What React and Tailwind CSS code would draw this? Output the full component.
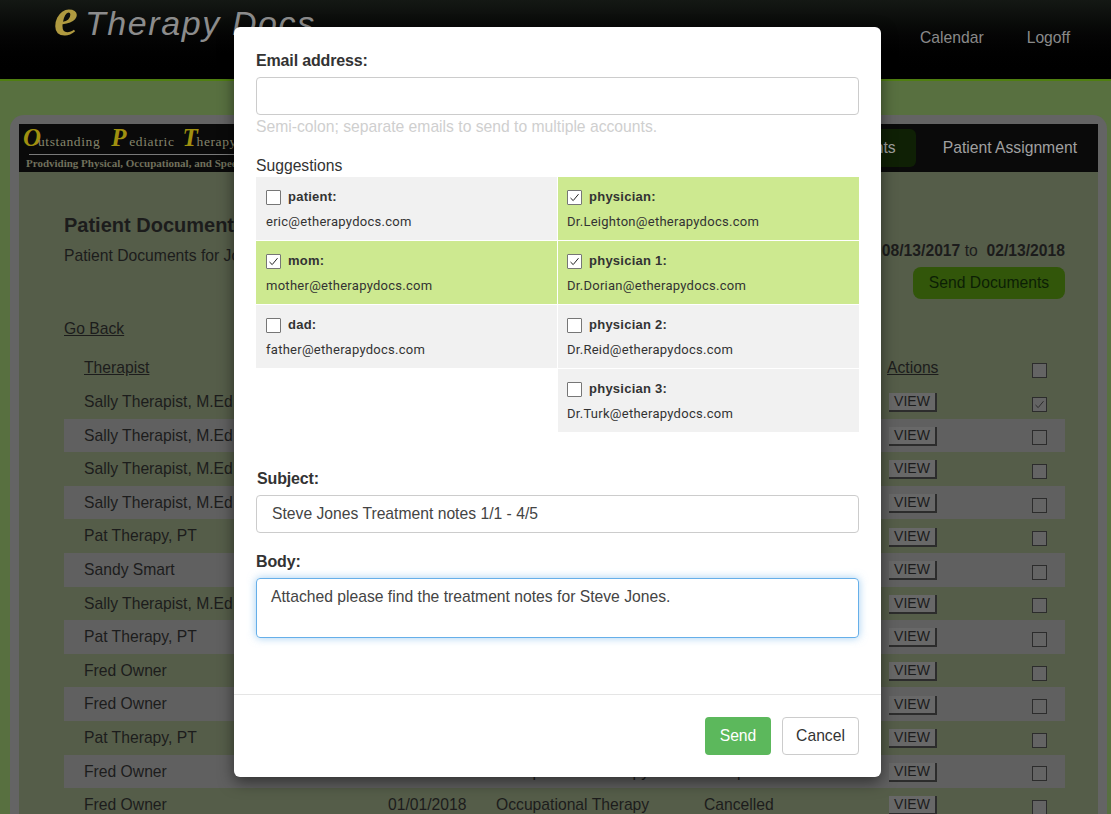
import React from 'react';

const rows = [
  { name: 'Sally Therapist, M.Ed', date: '01/12/2018', type: 'Speech Therapy', status: 'Completed', checked: true },
  { name: 'Sally Therapist, M.Ed', date: '01/11/2018', type: 'Speech Therapy', status: 'Completed' },
  { name: 'Sally Therapist, M.Ed', date: '01/10/2018', type: 'Speech Therapy', status: 'Completed' },
  { name: 'Sally Therapist, M.Ed', date: '01/09/2018', type: 'Speech Therapy', status: 'Completed' },
  { name: 'Pat Therapy, PT', date: '01/08/2018', type: 'Physical Therapy', status: 'Completed' },
  { name: 'Sandy Smart', date: '01/08/2018', type: 'Occupational Therapy', status: 'Completed' },
  { name: 'Sally Therapist, M.Ed', date: '01/05/2018', type: 'Speech Therapy', status: 'Completed' },
  { name: 'Pat Therapy, PT', date: '01/04/2018', type: 'Physical Therapy', status: 'Completed' },
  { name: 'Fred Owner', date: '01/04/2018', type: 'Occupational Therapy', status: 'Completed' },
  { name: 'Fred Owner', date: '01/03/2018', type: 'Occupational Therapy', status: 'Completed' },
  { name: 'Pat Therapy, PT', date: '01/02/2018', type: 'Physical Therapy', status: 'Completed' },
  { name: 'Fred Owner', date: '01/02/2018', type: 'Occupational Therapy', status: 'Completed' },
  { name: 'Fred Owner', date: '01/01/2018', type: 'Occupational Therapy', status: 'Cancelled' },
];

const leftSuggestions = [
  { label: 'patient:', email: 'eric@etherapydocs.com' },
  { label: 'mom:', email: 'mother@etherapydocs.com', on: true },
  { label: 'dad:', email: 'father@etherapydocs.com' },
];

const rightSuggestions = [
  { label: 'physician:', email: 'Dr.Leighton@etherapydocs.com', on: true },
  { label: 'physician 1:', email: 'Dr.Dorian@etherapydocs.com', on: true },
  { label: 'physician 2:', email: 'Dr.Reid@etherapydocs.com' },
  { label: 'physician 3:', email: 'Dr.Turk@etherapydocs.com' },
];

const Check = ({ stroke }) => (
  <svg width="11" height="11" viewBox="0 0 11 11" fill="none" stroke={stroke} strokeWidth="1">
    <path d="M1.5 6 L4.2 8.6 L9.5 2.2" />
  </svg>
);

const Suggestion = ({ item, right }) => (
  <div className={`h-[63px] pt-[12px] ${right ? 'pl-[9px]' : 'pl-[10px]'} ${item.on ? 'bg-[#cde990]' : 'bg-[#f1f1f1]'}`}>
    <div className="flex items-center gap-[7px] text-[13px] leading-[16px] font-bold text-[#333]">
      <span className="flex h-[15px] w-[15px] shrink-0 items-center justify-center rounded-[1px] border border-[#767676] bg-white">
        {item.on && <Check stroke="#222" />}
      </span>
      <span className="tracking-[0.25px]">{item.label}</span>
    </div>
    <div className="mt-[9px] font-['Roboto',sans-serif] text-[13px] leading-[16px] tracking-[0.27px] text-[#333]">{item.email}</div>
  </div>
);

const TableCheck = ({ checked }) => (
  <span className="mt-[5px] flex h-[15px] w-[15px] items-center justify-center border border-[#2c2c2c] bg-[#646464]">
    {checked && <Check stroke="#2c2c2c" />}
  </span>
);

const TableRow = ({ row, index }) => (
  <div className={`grid h-[33.6px] grid-cols-[304px_108px_208px_185px_143px_1fr] items-center pl-[20px] ${index % 2 === 1 ? 'bg-[#606060]' : ''}`}>
    <span>{row.name}</span>
    <span>{row.date}</span>
    <span>{row.type}</span>
    <span>{row.status}</span>
    <span>
      <span className="mt-[2px] flex h-[19px] w-[48px] items-center justify-center border-r-2 border-b-2 border-[#2c2c2c] bg-[#686868] text-[14px]">VIEW</span>
    </span>
    <TableCheck checked={row.checked} />
  </div>
);

export default function App() {
  return (
    <div className="relative h-[814px] overflow-hidden bg-[#587040] font-['Liberation_Sans',Arial,sans-serif] text-[15.7px] text-[#1c1c1c]">
      {/* Top bar */}
      <header className="flex h-[81px] items-start justify-between border-b-2 border-[#4f7f10] bg-gradient-to-b from-[#141814] via-[#040404] to-[#000]">
        <div className="ml-[54px] flex items-baseline pt-[3px]">
          <span className="font-['Liberation_Serif',serif] text-[54px] leading-[28px] font-bold italic text-[#b09a40]">e</span>
          <span className="ml-[7px] text-[34px] leading-[40px] tracking-[1.6px] text-[#8c8c8c] italic">Therapy Docs</span>
        </div>
        <nav className="mt-[26px] mr-[41px] flex gap-[43px] text-[#8a8a8a]">
          <span>Calendar</span>
          <span>Logoff</span>
        </nav>
      </header>

      {/* Main panel */}
      <div className="mt-[34px] mr-[4px] ml-[10px] h-[800px] rounded-t-[14px] bg-[#646464] px-[9px] pt-[9px]">
        <div className="flex h-[48px] items-center justify-between bg-[#0a0a0a]">
          <div className="ml-[4px] flex flex-col font-['Liberation_Serif',serif]">
            <div className="flex h-[28px] items-baseline text-[13.5px] tracking-[0.6px] text-[#85856a]">
              <span><b className="inline-block w-[15px] text-[25px] leading-[24px] font-bold italic text-[#a09010]">O</b>utstanding</span>
              <span className="ml-[11px]"><b className="inline-block w-[18px] text-[25px] leading-[24px] font-bold italic text-[#a09010]">P</b>ediatric</span>
              <span className="ml-[8px]"><b className="inline-block w-[14px] text-[25px] leading-[24px] font-bold italic text-[#a09010]">T</b>herapy</span>
            </div>
            <div className="ml-[6px] h-px bg-[#7a7a7a]" />
            <span className="mt-px ml-[3px] text-[11px] leading-[14px] font-bold text-[#70705c]">Prodviding Physical, Occupational, and Speech Therapy</span>
          </div>
          <nav className="mr-[21px] flex items-center text-[#a0a0a0]">
            <span className="mr-[27px] rounded-[6px] bg-[#0f2005] py-[7px] pr-[20px] pl-[20px]">Patient Documents</span>
            <span>Patient Assignment</span>
          </nav>
        </div>

        <main className="h-[700px] rounded-b-[8px] bg-[#555d49] pt-[41px] pr-[33px] pl-[45px]">
          <div className="flex items-start justify-between">
            <div>
              <h1 className="text-[20px] leading-[24px] font-bold">Patient Documents</h1>
              <p className="mt-[9px] leading-[20px]">Patient Documents for John Smith</p>
            </div>
            <div className="mt-[28px] flex flex-col items-end">
              <p className="leading-[20px]"><b>08/13/2017</b> to&nbsp; <b>02/13/2018</b></p>
              <button className="mt-[6px] h-[32px] w-[152px] rounded-[8px] bg-[#32560a] text-[15.7px] text-[#0c1f05]">Send Documents</button>
            </div>
          </div>

          <a className="mt-[20px] block leading-[20px] underline">Go Back</a>

          <div className="mt-[12.4px]">
            <div className="grid h-[33.6px] grid-cols-[304px_108px_208px_185px_143px_1fr] items-center pl-[20px]">
              <span className="underline">Therapist</span>
              <span />
              <span />
              <span />
              <span className="-ml-[2px] underline">Actions</span>
              <TableCheck />
            </div>
            {rows.map((row, i) => (
              <TableRow key={i} row={row} index={i} />
            ))}
          </div>
        </main>
      </div>

      {/* Email dialog */}
      <div className="absolute top-[27px] left-[234px] h-[750px] w-[647px] rounded-[6px] bg-white text-[#333] shadow-[0_5px_15px_rgba(0,0,0,0.5)]">
        <div className="h-[667px] px-[22px] pt-[23px]">
          <label className="block text-[16px] leading-[22px] font-bold tracking-[-0.15px]">Email address:</label>
          <input type="text" className="mt-[5px] block h-[38px] w-[603px] rounded-[4px] border border-[#ccc] px-[14px] outline-none" />
          <p className="mt-px leading-[22px] text-[#cfcfcf]">Semi-colon; separate emails to send to multiple accounts.</p>

          <div className="mt-[17px] leading-[22px]">Suggestions</div>
          <div className="grid w-[603px] grid-cols-2 items-start gap-x-px">
            <div className="flex flex-col gap-px">
              {leftSuggestions.map((s) => <Suggestion key={s.label} item={s} />)}
            </div>
            <div className="flex flex-col gap-px">
              {rightSuggestions.map((s) => <Suggestion key={s.label} item={s} right />)}
            </div>
          </div>

          <label className="mt-[36px] ml-px block text-[16px] leading-[22px] font-bold tracking-[-0.15px]">Subject:</label>
          <input type="text" defaultValue="Steve Jones Treatment notes 1/1 - 4/5" className="mt-[5px] block h-[38px] w-[603px] rounded-[4px] border border-[#ccc] px-[15px] text-[15.7px] text-[#444] outline-none" />

          <label className="mt-[18px] block text-[16px] leading-[22px] font-bold tracking-[-0.15px]">Body:</label>
          <textarea defaultValue="Attached please find the treatment notes for Steve Jones." className="mt-[5px] block h-[60px] w-[603px] resize-none rounded-[4px] border border-[#66afe9] px-[14px] py-[7px] text-[15.7px] leading-[22px] text-[#444] shadow-[0_0_8px_rgba(102,175,233,0.6)] outline-none" />
        </div>

        <div className="flex justify-end gap-[11px] border-t border-[#e5e5e5] px-[22px] pt-[22px]">
          <button className="h-[38px] w-[66px] rounded-[4px] bg-[#5cb85c] text-[15.7px] text-white">Send</button>
          <button className="h-[38px] w-[77px] rounded-[4px] border border-[#ccc] bg-white text-[15.7px] text-[#333]">Cancel</button>
        </div>
      </div>
    </div>
  );
}
